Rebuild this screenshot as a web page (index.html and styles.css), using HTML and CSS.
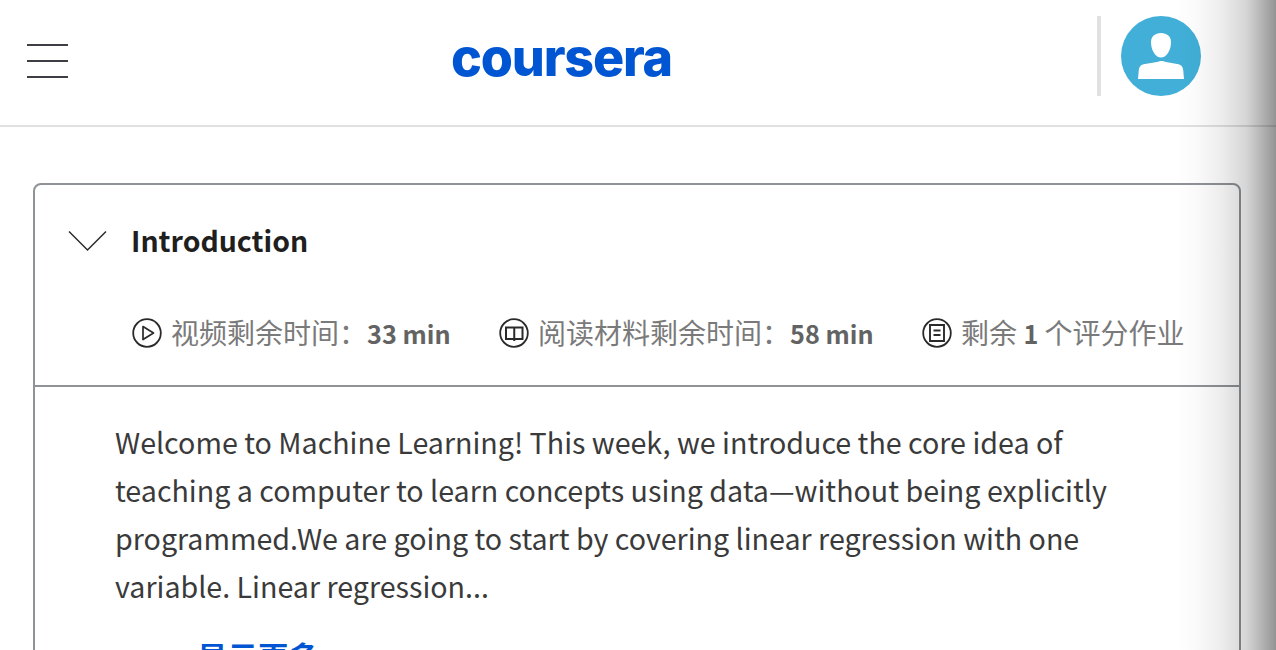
FILE: index.html
```html
<!DOCTYPE html>
<html lang="en">
<head>
<meta charset="utf-8">
<title>Coursera</title>
<link rel="stylesheet" href="styles.css">
</head>
<body>
<div class="page">
  <header class="topbar">
    <button class="menu" aria-label="menu"><span></span><span></span><span></span></button>
    <div class="logo">coursera</div>
    <div class="account">
      <div class="avatar">
        <svg width="80" height="80" viewBox="0 0 80 80"><path fill="#fff" d="M40 17c-6 0-10 3.500-10 9 0 4 1 8 3 11 2 3 4.500 4.500 7 4.500s5-1.500 7-4.500c2-3 3-7 3-11 0-5.500-4-9-10-9z"/><path fill="#fff" d="M17 63l.8-9c.3-3 1.700-5 4.700-5.800L36 46c2.500-.6 3.500-.9 4.500-.9s2 .3 4.500.9l12.500 2.200c3 .8 4.400 2.800 4.700 5.800l.8 9z"/></svg>
      </div>
    </div>
  </header>
  <main class="content">
    <section class="card">
      <div class="card-head">
        <div class="title-row">
          <svg class="chevron" width="40" height="22" viewBox="0 0 40 22"><path d="M1 1.500l18.500 18.500L38 1.500" fill="none" stroke="#2a2a2a" stroke-width="1.500"/></svg>
          <h2>Introduction</h2>
        </div>
        <div class="meta-row">
          <div class="meta">
            <svg class="ico" width="30" height="30" viewBox="0 0 30 30"><circle cx="15" cy="15" r="13.800" fill="none" stroke="#2a2a2a" stroke-width="1.800"/><path d="M11 8.500L21.500 15 11 21.500z" fill="none" stroke="#2a2a2a" stroke-width="1.700" stroke-linejoin="round"/></svg>
            <span lang="zh-CN">视频剩余时间：<b>33 min</b></span>
          </div>
          <div class="meta">
            <svg class="ico" width="30" height="30" viewBox="0 0 30 30"><circle cx="15" cy="15" r="13.800" fill="none" stroke="#2a2a2a" stroke-width="1.800"/><path d="M7 9.500h16.500v11.500H7zM15.250 9.500v13.500" fill="none" stroke="#2a2a2a" stroke-width="2"/></svg>
            <span lang="zh-CN">阅读材料剩余时间：<b>58 min</b></span>
          </div>
          <div class="meta">
            <svg class="ico" width="30" height="30" viewBox="0 0 30 30"><circle cx="15" cy="15" r="13.800" fill="none" stroke="#2a2a2a" stroke-width="1.800"/><path d="M8 7h14v16H8zM11.500 12.500h7M11.500 17h7" fill="none" stroke="#2a2a2a" stroke-width="1.900"/></svg>
            <span lang="zh-CN">剩余 <b>1</b> 个评分作业</span>
          </div>
        </div>
      </div>
      <div class="card-body">
        <p>Welcome to Machine Learning! This week, we introduce the core idea of teaching a computer to learn concepts using data—without being explicitly programmed.We are going to start by covering linear regression with one variable. Linear regression...</p>
        <a class="more" href="#" lang="zh-CN">显示更多</a>
      </div>
    </section>
  </main>
  <div class="edge-shadow"></div>
</div>
</body>
</html>
```
FILE: styles.css
```css
* { box-sizing: border-box; }
html, body { margin: 0; padding: 0; height: 100%; overflow: hidden; background: #fff; }
body { font-family: "Noto Sans CJK SC", "Noto Sans", sans-serif; color: #333; }
.page { position: relative; width: 1276px; height: 650px; overflow: hidden; }

.topbar { height: 127px; border-bottom: 2px solid #e1e1e1; padding: 16px 75px 29px 27px; display: flex; align-items: center; justify-content: space-between; }
.menu { width: 41px; height: 34px; padding: 0; margin: 10px 0 0; border: 0; background: none; display: flex; flex-direction: column; justify-content: space-between; }
.menu span { display: block; height: 2px; background: #3d3f44; }
.logo { font-family: Inter, sans-serif; font-weight: 800; font-size: 52px; line-height: 60px; letter-spacing: -1.2px; color: #0056d2; margin-right: 42px; margin-top: 4px; }
.account { border-left: 4px solid #e1e1e1; height: 80px; padding-left: 20px; }
.avatar { width: 80px; height: 80px; border-radius: 50%; background: #41afd8; }
.avatar svg { display: block; }

.content { padding: 56px 35px 0 33px; }
.card { border: 2px solid #8f9296; border-radius: 8px; height: 600px; }
.card-head { height: 202px; border-bottom: 2px solid #8f9296; padding: 0 0 0 33px; }
.title-row { height: 112px; display: flex; align-items: center; }
.chevron { flex: none; margin-right: 23px; }
h2 { margin: -2px 0 0; font-size: 28.45px; line-height: 40px; font-weight: 700; color: #1f1f1f; }
.meta-row { display: flex; padding-left: 64px; gap: 48.5px; }
.meta { display: flex; align-items: center; gap: 9px; font-size: 28px; line-height: 40px; color: #7a7a7a; margin-top: 15px; }
.meta b { font-weight: 700; font-size: 25.2px; color: #636363; }
.ico { flex: none; }
.card-body { padding: 31px 0 0 80px; }
.card-body p { margin: 0; width: 1010px; font-size: 28.63px; line-height: 48px; color: #3a3a3a; }
.more { display: block; margin: 22px 0 0 82px; font-size: 30.5px; font-weight: 700; line-height: 48px; color: #0056d2; text-decoration: none; }

.edge-shadow { position: absolute; top: 0; right: 0; width: 100px; height: 650px; pointer-events: none; background: linear-gradient(to right, rgba(0,0,0,0) 0%, rgba(0,0,0,.02) 20%, rgba(0,0,0,.07) 45%, rgba(0,0,0,.16) 70%, rgba(0,0,0,.42) 100%); }
```
